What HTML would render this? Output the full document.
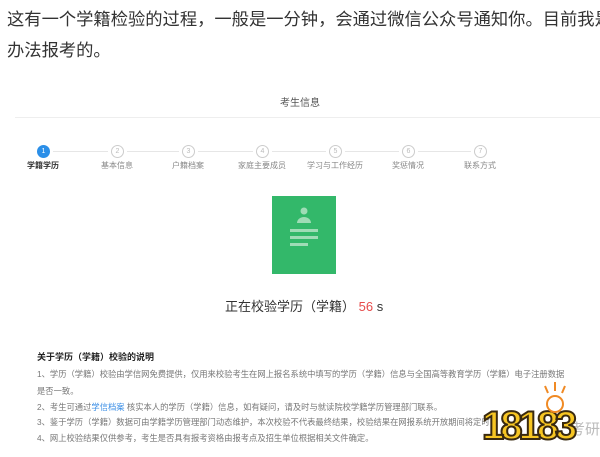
<!DOCTYPE html>
<html><head><meta charset="utf-8"><style>
html,body{margin:0;padding:0;width:600px;height:457px;overflow:hidden;background:#fff;font-family:"Liberation Sans","Noto Sans CJK SC",sans-serif}
.a{position:absolute;white-space:nowrap}
.p{font-size:17.3px;color:#333;left:7px}
.step{position:absolute;top:145px;width:13px;height:13px;border-radius:50%;border:1px solid #ccc;box-sizing:border-box;font-size:7px;color:#bbb;text-align:center;line-height:11px}
.lbl{position:absolute;top:160px;font-size:8px;color:#888;transform:translateX(-50%);white-space:nowrap}
.ln{position:absolute;top:151px;height:1px;background:#e6e6e6}
.n{font-size:8.3px;color:#777;left:37px}
</style></head><body>
<div class="a p" style="top:5px">这有一个学籍检验的过程，一般是一分钟，会通过微信公众号通知你。目前我是</div>
<div class="a p" style="top:36px">办法报考的。</div>
<div class="a" style="top:94px;left:0;width:600px;text-align:center;font-size:10px;color:#555">考生信息</div>
<div class="a" style="top:117px;left:15px;width:585px;height:1px;background:#eee"></div>

<div class="step" style="left:37px;background:#2b8fe8;border-color:#2b8fe8;color:#fff">1</div>
<div class="step" style="left:111px">2</div>
<div class="step" style="left:182px">3</div>
<div class="step" style="left:256px">4</div>
<div class="step" style="left:329px">5</div>
<div class="step" style="left:402px">6</div>
<div class="step" style="left:474px">7</div>
<div class="ln" style="left:53px;width:55px"></div>
<div class="ln" style="left:127px;width:52px"></div>
<div class="ln" style="left:198px;width:55px"></div>
<div class="ln" style="left:272px;width:54px"></div>
<div class="ln" style="left:345px;width:54px"></div>
<div class="ln" style="left:418px;width:53px"></div>
<div class="lbl" style="left:43px;color:#333;font-weight:bold">学籍学历</div>
<div class="lbl" style="left:117px">基本信息</div>
<div class="lbl" style="left:188px">户籍档案</div>
<div class="lbl" style="left:262px">家庭主要成员</div>
<div class="lbl" style="left:335px">学习与工作经历</div>
<div class="lbl" style="left:408px">奖惩情况</div>
<div class="lbl" style="left:480px">联系方式</div>

<div class="a" style="left:272px;top:196px;width:64px;height:78px;background:#33b86a"></div>
<svg class="a" style="left:272px;top:196px" width="64" height="78">
<circle cx="32" cy="15" r="3.5" fill="#9fdcb6"/>
<path d="M25 27 a7 6 0 0 1 14 0 z" fill="#9fdcb6"/>
<rect x="18" y="33" width="28" height="3" fill="#9fdcb6"/>
<rect x="18" y="40" width="28" height="3" fill="#9fdcb6"/>
<rect x="18" y="47" width="18" height="3" fill="#9fdcb6"/>
</svg>
<div class="a" style="left:225px;top:296px;font-size:13px;color:#333">正在校验学历（学籍） <span style="color:#e64c4c">56</span> s</div>

<div class="a" style="left:37px;top:350px;font-size:9px;font-weight:bold;color:#222">关于学历（学籍）校验的说明</div>
<div class="a n" style="top:368px">1、学历（学籍）校验由学信网免费提供，仅用来校验考生在网上报名系统中填写的学历（学籍）信息与全国高等教育学历（学籍）电子注册数据</div>
<div class="a n" style="top:385px">是否一致。</div>
<div class="a n" style="top:401px">2、考生可通过<span style="color:#3a8ee6">学信档案</span> 核实本人的学历（学籍）信息，如有疑问，请及时与就读院校学籍学历管理部门联系。</div>
<div class="a n" style="top:416px">3、鉴于学历（学籍）数据可由学籍学历管理部门动态维护，本次校验不代表最终结果，校验结果在网报系统开放期间将定时</div>
<div class="a n" style="top:432px">4、网上校验结果仅供参考，考生是否具有报考资格由报考点及招生单位根据相关文件确定。</div>

<div class="a" style="left:570px;top:418px;font-size:15px;color:#bbb">考研</div>
<div class="a" style="left:482px;top:404px;font-size:40px;font-weight:bold;color:#f7c623;-webkit-text-stroke:2px #3a2a10;letter-spacing:-4px;font-family:'Liberation Sans',sans-serif">18183</div>
<svg class="a" style="left:535px;top:380px" width="40" height="34"><circle cx="20" cy="24" r="8" fill="none" stroke="#f08a24" stroke-width="2"/><path d="M10 6l3 7M20 2v9M30 6l-3 7" stroke="#f08a24" stroke-width="2"/></svg>
</body></html>
